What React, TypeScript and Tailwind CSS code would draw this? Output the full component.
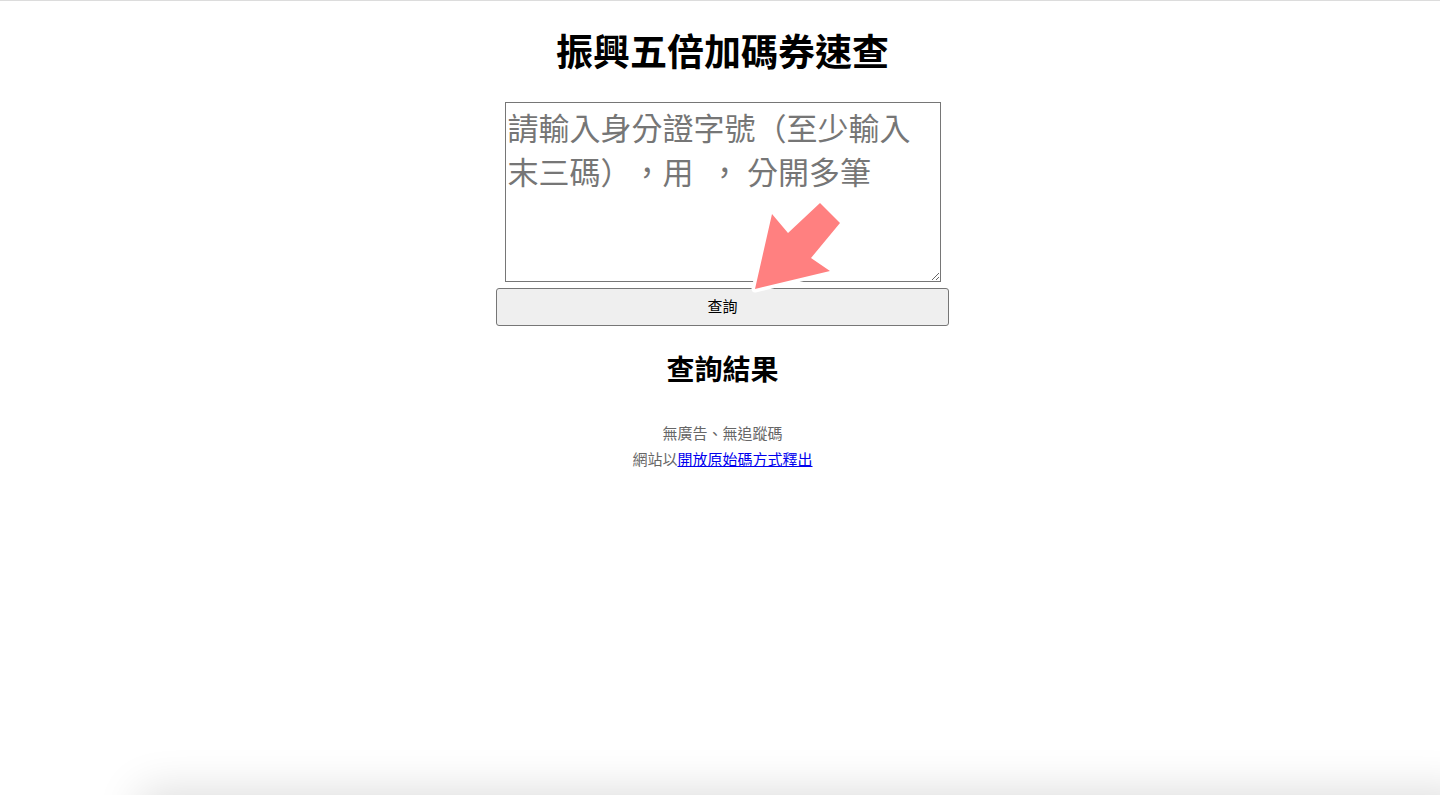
import React from 'react';

const cjk = { fontFamily: '"Noto Sans CJK TC", "Noto Sans", sans-serif' };

const Arrow = () => (
    <svg
        className="absolute left-[740px] top-[190px] pointer-events-none"
        width="120"
        height="115"
        viewBox="0 0 120 115"
    >
        <path
            d="M15 98 L32 23 L48 42 L80 12 L100 32 L71 67 L90 80 Z"
            fill="#ff8080"
            stroke="#ffffff"
            strokeWidth="7"
            strokeLinejoin="round"
            paintOrder="stroke"
        />
    </svg>
);

export default function App() {
    return (
        <div className="min-h-screen bg-white relative overflow-hidden border-t border-[#dcdcdc]" style={cjk}>
            <div className="flex flex-col items-center pt-[27px] pl-[5px]">
                <h1 className="text-[37px] leading-[44px] font-bold text-black">振興五倍加碼券速查</h1>

                <textarea
                    className="mt-[30px] w-[436px] h-[180px] border border-[#767676] p-[2px] text-[31px] leading-[44px] text-black placeholder:text-[#767676] bg-white [text-spacing-trim:space-all]"
                    style={cjk}
                    placeholder={'請輸入身分證字號（至少輸入末三碼），用\u2002， 分開多筆'}
                />

                <button
                    className="mt-[6px] w-[453px] h-[38px] border border-[#767676] rounded-[3px] bg-[#efefef] text-[15px] leading-[20px] pb-[2px] text-black"
                    style={cjk}
                >
                    查詢
                </button>

                <h2 className="mt-[24px] text-[28px] leading-[36px] font-bold text-black">查詢結果</h2>

                <div className="mt-[34px] text-center text-[15px] leading-[26px] text-[#666666]">
                    <p>無廣告、無追蹤碼</p>
                    <p>
                        網站以
                        <a href="#" className="text-[#0000ee] underline">開放原始碼方式釋出</a>
                    </p>
                </div>
            </div>

            <Arrow />

            {/* bottom window shadow */}
            <div className="absolute left-[150px] right-[-20px] top-[800px] h-[60px] bg-white shadow-[0_0_45px_10px_rgba(0,0,0,0.14)] pointer-events-none" />
        </div>
    );
}
